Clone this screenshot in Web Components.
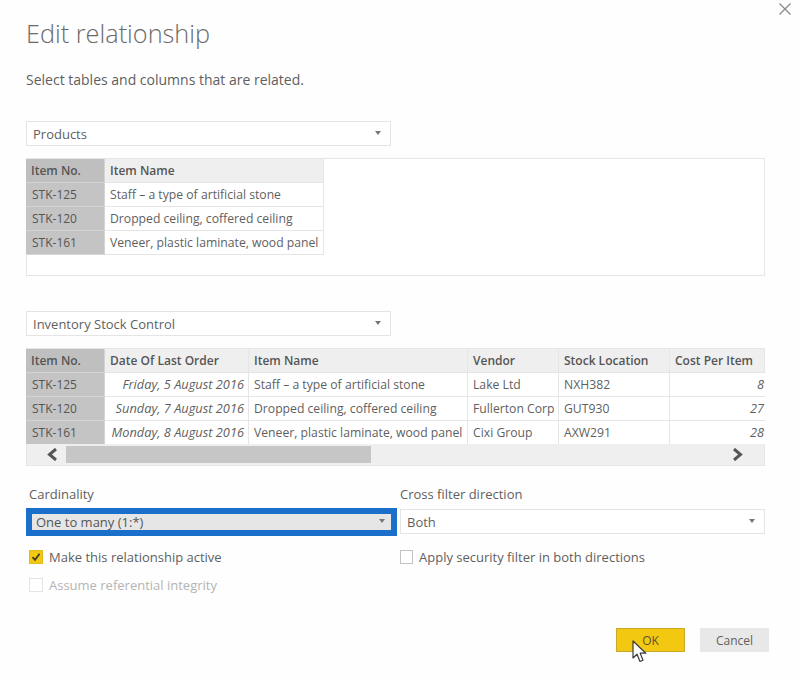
<!DOCTYPE html>
<html>
<head>
<meta charset="utf-8">
<title>Edit relationship</title>
<style>
  html, body { margin: 0; padding: 0; background: #fefefe; }
  body { width: 800px; height: 680px; overflow: hidden; font-family: "Open Sans", "Liberation Sans", sans-serif; color: #5f5f5f; }
</style>
</head>
<body>
<edit-dialog>
  <span slot="title">Edit relationship</span>
  <span slot="intro">Select tables and columns that are related.</span>

  <combo-box slot="first" value="Products"></combo-box>
  <data-grid slot="first" height="118" cols="79,219"
    head="Item No.|Item Name"
    rows="STK-125|Staff – a type of artificial stone;STK-120|Dropped ceiling, coffered ceiling;STK-161|Veneer, plastic laminate, wood panel"></data-grid>

  <combo-box slot="second" value="Inventory Stock Control"></combo-box>
  <data-grid slot="second" height="118" scroll cols="79,144,219,91,111,95" italic="1,5"
    head="Item No.|Date Of Last Order|Item Name|Vendor|Stock Location|Cost Per Item"
    rows="STK-125|Friday, 5 August 2016|Staff – a type of artificial stone|Lake Ltd|NXH382|8;STK-120|Sunday, 7 August 2016|Dropped ceiling, coffered ceiling|Fullerton Corp|GUT930|27;STK-161|Monday, 8 August 2016|Veneer, plastic laminate, wood panel|Cixi Group|AXW291|28"></data-grid>

  <span slot="card-label">Cardinality</span>
  <combo-box slot="card-box" value="One to many (1:*)" focused></combo-box>
  <span slot="cross-label">Cross filter direction</span>
  <combo-box slot="cross-box" value="Both"></combo-box>
  <check-option slot="card-opts" checked>Make this relationship active</check-option>
  <check-option slot="card-opts" disabled>Assume referential integrity</check-option>
  <check-option slot="cross-opts">Apply security filter in both directions</check-option>

  <action-button slot="actions" primary>OK</action-button>
  <action-button slot="actions">Cancel</action-button>
</edit-dialog>

<script>
class editDialog extends HTMLElement {
  constructor() {
    super();
    this.attachShadow({ mode: "open" });
    this.shadowRoot.innerHTML = `
      <style>
        :host { display: block; position: relative; width: 800px; height: 680px; box-sizing: border-box; padding: 13px 0 0 26px; }
        h1 { margin: 0; font-size: 25.3px; line-height: 40px; font-weight: 300; color: #6a6a6a; }
        p { margin: 17px 0 0; font-size: 14px; line-height: 20px; color: #5f5f5f; }
        .section { display: flex; flex-direction: column; gap: 12px; }
        .first { margin-top: 31px; }
        .second { margin-top: 35px; }
        .props { display: grid; grid-template-columns: 374px 366px; margin-top: 18px; }
        .label { font-size: 13px; line-height: 20px; padding-left: 3px; margin-bottom: 4px; color: #5f5f5f; }
        .cross .label { padding-left: 0; }
        .card-box { height: 28px; margin-top: 0; }
        .opts { display: flex; flex-direction: column; gap: 8px; margin-top: 11px; padding-left: 3px; }
        .cross .opts { margin-top: 13px; padding-left: 0; --box-size: 13px; }
        .cross-box { padding-top: 1px; }
        .actions { display: flex; justify-content: flex-end; gap: 15px; margin: 33px 31px 0 0; }
        .close { position: absolute; top: 2px; right: 8px; width: 14px; height: 14px; }
        .cursor { position: absolute; left: 632px; top: 640px; width: 16px; height: 23px; }
      </style>
      <svg class="close" viewBox="0 0 14 14"><path d="M1.5 1.5 12.5 12.5M12.5 1.5 1.5 12.5" stroke="#8a8a8a" stroke-width="1.3" fill="none"/></svg>
      <h1><slot name="title"></slot></h1>
      <p><slot name="intro"></slot></p>
      <div class="section first"><slot name="first"></slot></div>
      <div class="section second"><slot name="second"></slot></div>
      <div class="props">
        <div class="card">
          <div class="label"><slot name="card-label"></slot></div>
          <div class="card-box"><slot name="card-box"></slot></div>
          <div class="opts"><slot name="card-opts"></slot></div>
        </div>
        <div class="cross">
          <div class="label"><slot name="cross-label"></slot></div>
          <div class="cross-box"><slot name="cross-box"></slot></div>
          <div class="opts"><slot name="cross-opts"></slot></div>
        </div>
      </div>
      <div class="actions"><slot name="actions"></slot></div>
      <svg class="cursor" viewBox="0 0 16 23"><path d="M1 1V18L5 14.2 8 21.5 11 20.2 8.2 13.2H13.8Z" fill="#fff" stroke="#3a3a3a" stroke-width="1.2" stroke-linejoin="round"/></svg>
    `;
  }
}
customElements.define("edit-dialog", editDialog);

class comboBox extends HTMLElement {
  constructor() {
    super();
    this.attachShadow({ mode: "open" });
    this.shadowRoot.innerHTML = `
      <style>
        :host { display: block; box-sizing: border-box; width: 365px; height: 25px; background: #fff; border: 1px solid #e4e4e4; }
        :host([focused]) { width: 371px; height: 28px; background: #e6e6e6; border: solid #1a6fca; border-width: 6px; }
        .in { display: flex; align-items: center; justify-content: space-between; height: 100%; padding: 0 9px 0 6px; font-size: 13px; color: #5f5f5f; }
        :host([focused]) .in { padding: 0 6px 0 4px; color: #555; }
        i { width: 0; height: 0; border: 3px solid transparent; border-top: 4px solid #777; border-bottom: 0; margin-top: -2px; }
      </style>
      <div class="in"><span>${this.getAttribute("value")}</span><i></i></div>
    `;
  }
}
customElements.define("combo-box", comboBox);

class dataGrid extends HTMLElement {
  constructor() {
    super();
    this.attachShadow({ mode: "open" });
    this.cols = this.getAttribute("cols").split(",");
    this.head = this.getAttribute("head").split("|");
    this.rows = this.getAttribute("rows").split(";").map((r) => r.split("|"));
    this.italic = (this.getAttribute("italic") || "").split(",").filter(Boolean).map(Number);

    let cells = this.head.map((h, i) => `<div class="c h ${i ? "" : "key"}">${h}</div>`).join("");
    this.rows.forEach((row) => {
      row.forEach((v, i) => {
        cells += `<div class="c ${i ? "" : "key"} ${this.italic.includes(i) ? "it" : ""} ${i == 5 ? "last" : ""}">${v}</div>`;
      });
    });

    const bar = this.hasAttribute("scroll") ? `
      <div class="bar">
        <svg class="arrow" viewBox="0 0 12 13"><path d="M10 1 3.5 6.5 10 12" fill="none" stroke="#555" stroke-width="3"/></svg>
        <div class="thumb"></div>
        <svg class="arrow" viewBox="0 0 12 13"><path d="M2 1 8.5 6.5 2 12" fill="none" stroke="#555" stroke-width="3"/></svg>
      </div>` : "";

    this.shadowRoot.innerHTML = `
      <style>
        :host { display: flex; flex-direction: column; justify-content: space-between; box-sizing: border-box; width: 739px; height: ${this.getAttribute("height")}px; border: 1px solid #e6e6e6; background: #fff; }
        .grid { display: grid; grid-template-columns: ${this.cols.map((c) => c + "px").join(" ")}; grid-auto-rows: 24px; width: max-content; margin-left: -1px; overflow: hidden; }
        .c { box-sizing: border-box; padding: 0 4px 0 5px; font-size: 12.2px; line-height: 23px; color: #5f5f5f; background: #fff; border-right: 1px solid #e6e6e6; border-bottom: 1px solid #e6e6e6; white-space: nowrap; overflow: hidden; }
        .h { background: #efefef; font-size: 12px; font-weight: 600; color: #555; }
        .key { background: #c4c4c4; border-color: #d4d4d4; color: #555; font-size: 12px; padding-left: 6px; }
        .h.key { background: #bfbfbf; padding-left: 5px; }
        .it { font-style: italic; font-size: 12.8px; text-align: right; }
        .last { padding-right: 1px; border-right: 0; }
        .bar { display: flex; align-items: center; height: 21px; background: #efefef; }
        .arrow { width: 12px; height: 13px; flex: none; }
        .arrow:first-child { margin-left: 19px; }
        .arrow:last-child { margin-left: 361px; }
        .thumb { width: 305px; height: 17px; margin-left: 8px; background: #c6c6c6; }
      </style>
      <div class="grid">${cells}</div>
      ${bar}
    `;
  }
}
customElements.define("data-grid", dataGrid);

class checkOption extends HTMLElement {
  constructor() {
    super();
    this.attachShadow({ mode: "open" });
    this.shadowRoot.innerHTML = `
      <style>
        :host { display: flex; align-items: center; gap: 6px; height: 20px; font-size: 13px; color: #5f5f5f; }
        :host([disabled]) { color: #b4b4b4; }
        .box { box-sizing: border-box; width: var(--box-size, 14px); height: 14px; border: 1px solid #c2c2c2; background: #fff; display: flex; }
        :host([disabled]) .box { border-color: #e4e4e4; }
        :host([checked]) .box { background: #f2c811; border-color: #e0bb20; }
        svg { width: 100%; height: 100%; display: none; }
        :host([checked]) svg { display: block; }
      </style>
      <span class="box"><svg viewBox="0 0 12 12"><path d="M2.5 6.2 5 8.8 9.6 2.8" fill="none" stroke="#3d3d2a" stroke-width="1.8"/></svg></span>
      <span><slot></slot></span>
    `;
  }
}
customElements.define("check-option", checkOption);

class actionButton extends HTMLElement {
  constructor() {
    super();
    this.attachShadow({ mode: "open" });
    this.shadowRoot.innerHTML = `
      <style>
        :host { display: flex; align-items: center; justify-content: center; box-sizing: border-box; width: 69px; height: 24px; background: #e8e8e8; font-size: 12px; color: #5f5f5f; }
        :host([primary]) { background: #f2c811; border: 1px solid #c9a92a; color: #5a5430; }
      </style>
      <slot></slot>
    `;
  }
}
customElements.define("action-button", actionButton);
</script>
</body>
</html>
